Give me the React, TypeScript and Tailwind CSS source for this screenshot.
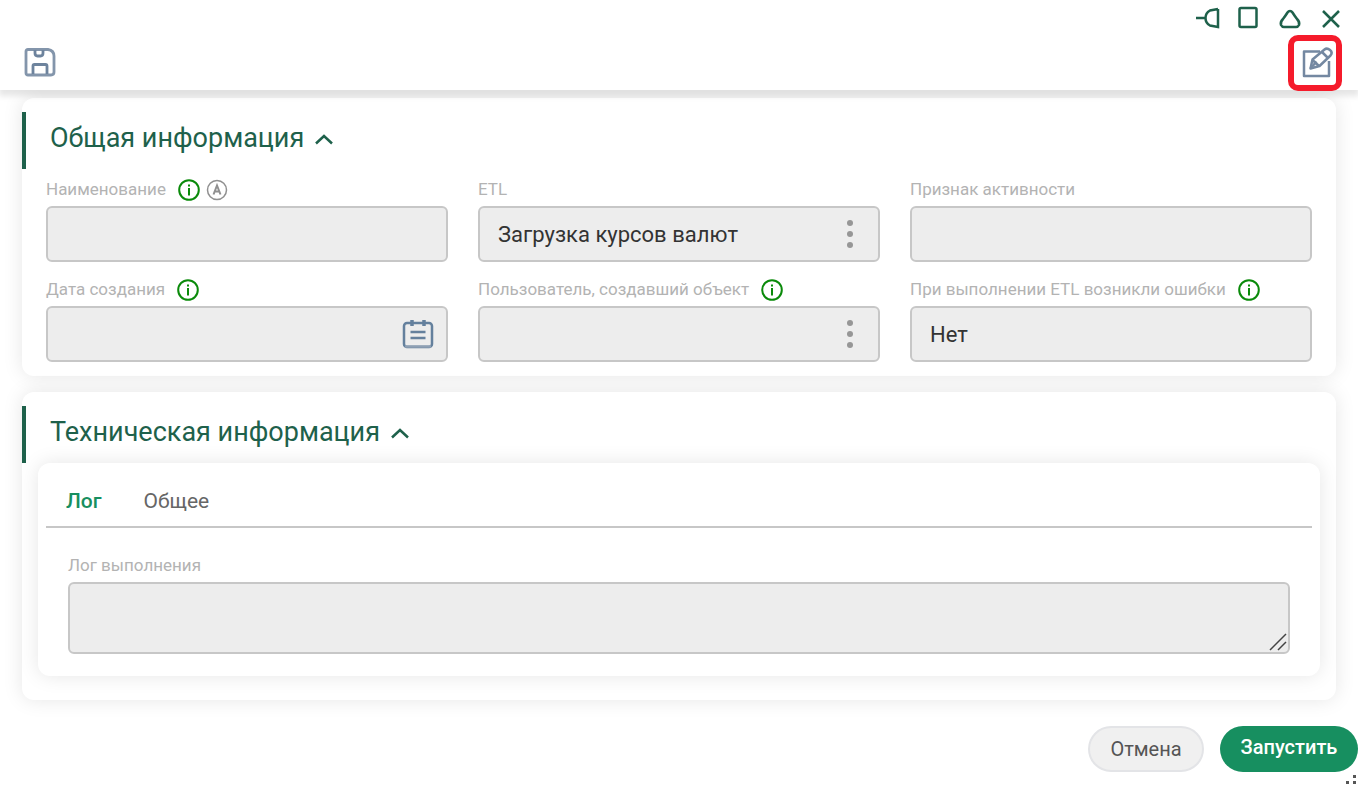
import { useState, type ReactNode } from "react";

function InfoIcon() {
  return (
    <svg viewBox="0 0 22 22" className="h-[22px] w-[22px]" fill="none" stroke="#0a8a0a" strokeWidth="2" aria-hidden="true">
      <circle cx="11" cy="11" r="9.800" />
      <path d="M11 9v7.500M11 5.500v2" />
    </svg>
  );
}

function AutoIcon() {
  return (
    <svg viewBox="0 0 22 22" className="h-[22px] w-[22px]" fill="none" stroke="#909090" strokeWidth="1.500" aria-hidden="true">
      <circle cx="11" cy="11" r="9.500" />
      <path d="M7.500 15.500 11 6.500 14.500 15.500M8.500 12.500h5" strokeWidth="2" />
    </svg>
  );
}

function CalendarIcon() {
  return (
    <svg viewBox="0 0 32 32" className="h-8 w-8" fill="none" stroke="#64809d" strokeWidth="2.500" aria-hidden="true">
      <rect x="2" y="5" width="28" height="24" rx="3" />
      <path d="M3 28.500h26" stroke="#8fa0b4" />
      <path d="M10 2v6M22 2v6" strokeWidth="3.500" />
      <path d="M8.500 14h15M8.500 20h15" strokeWidth="2.500" />
    </svg>
  );
}

function DotsIcon() {
  return (
    <svg viewBox="0 0 8 32" className="h-8 w-2" fill="#969696" aria-hidden="true">
      <circle cx="4" cy="5" r="3" />
      <circle cx="4" cy="16" r="3" />
      <circle cx="4" cy="27" r="3" />
    </svg>
  );
}

type FieldProps = {
  id: string;
  label: string;
  value?: string;
  icons?: ReactNode;
  action?: ReactNode;
  actionLabel?: string;
};

function Field({ id, label, value = "", icons, action, actionLabel }: FieldProps) {
  return (
    <div>
      <div className="flex h-8 items-center gap-3">
        <label htmlFor={id} className="text-[17px] text-[#b3b3b3]">
          {label}
        </label>
        <span className="flex gap-1.5">{icons}</span>
      </div>
      <div className="flex h-14 items-center rounded-md border-2 border-[#c7c7c7] bg-[#ededed]">
        <input
          id={id}
          readOnly
          defaultValue={value}
          className="h-full min-w-0 flex-1 bg-transparent px-[18px] text-[22px] text-[#333] outline-none"
        />
        {action && (
          <button type="button" aria-label={actionLabel} className="flex h-full w-14 items-center justify-center">
            {action}
          </button>
        )}
      </div>
    </div>
  );
}

function Section({ title, children }: { title: string; children: ReactNode }) {
  const [isOpen, setIsOpen] = useState(true);

  return (
    <section className="rounded-xl bg-white pt-3.5 shadow-[0_0_20px_rgba(0,0,0,0.1)]">
      <h2 className="border-l-4 border-[#1e614b]">
        <button
          type="button"
          aria-expanded={isOpen}
          onClick={() => setIsOpen((open) => !open)}
          className="flex h-[57px] items-center gap-2.5 px-6 pb-1 text-[27px] text-[#1e614b]"
        >
          <span>{title}</span>
          <svg viewBox="0 0 20 12" className="h-3 w-5" fill="none" stroke="currentColor" strokeWidth="2.500" aria-hidden="true">
            <path d="M2 10.500 10 3l8 7.500" />
          </svg>
        </button>
      </h2>
      {isOpen && children}
    </section>
  );
}

const windowControls = [
  { label: "Закрепить", path: "M1 13h9M23 4v18L15 20.500Q10.500 18 10.500 13T15 5.500L23 4" },
  { label: "Развернуть", path: "M5 3h14q1.500 0 1.500 1.500v16q0 1.500-1.500 1.500H5q-1.500 0-1.500-1.500v-16Q3.500 3 5 3Z" },
  { label: "Свернуть", path: "M13 6q1.500 0 2.500 1.500Q17 10 20 14q3 3 2 6-1 2-3 2H7q-2 0-3-2-1-3 2-6 3-4 4.500-6.500Q11.500 6 13 6Z" },
  { label: "Закрыть", path: "M5 6l16 16M21 6 5 22" },
];

const tabs = ["Лог", "Общее"];

export default function App() {
  const [activeTab, setActiveTab] = useState("Лог");

  return (
    <div className="relative flex min-h-screen flex-col bg-white [font-family:Roboto,'Liberation_Sans',sans-serif]">
      <header className="relative z-10 bg-white shadow-[0_5px_6px_1px_rgba(0,0,0,0.1)]">
        <div className="flex h-9 items-center justify-end pr-[7px]">
          {windowControls.map((control) => (
            <button key={control.label} type="button" aria-label={control.label} className="flex h-9 w-[41px] items-center justify-center">
              <svg viewBox="0 0 26 26" className="h-[26px] w-[26px]" fill="none" stroke="#1e614b" strokeWidth="2.500" aria-hidden="true">
                <path d={control.path} />
              </svg>
            </button>
          ))}
        </div>
        <div className="flex h-[54px] items-center justify-between pr-4 pl-6">
          <button type="button" aria-label="Сохранить">
            <svg viewBox="0 0 32 30" className="h-[30px] w-8" fill="none" stroke="#8395ab" strokeWidth="2.800" strokeLinejoin="round" aria-hidden="true">
              <path d="M4 1.500h20q6 1 6 6.500V24q0 3-3 3H4q-2 0-2-2V3.500q0-2 2-2Z" />
              <path d="M11 2v3q0 3 2.500 3h3Q19 8 19 5V2" stroke="#6d839d" />
              <path d="M9 26v-8q0-1.500 1.500-1.500h11q1.500 0 1.500 1.500v8" stroke="#6d839d" />
            </svg>
          </button>
          <div className="relative flex w-[54px] justify-center">
            <button type="button" aria-label="Редактировать">
              <svg viewBox="0 0 32 32" className="ml-1 h-8 w-8" fill="none" stroke="#7488a1" strokeWidth="2.500" strokeLinejoin="round" aria-hidden="true">
                <path d="M19 4.500H3V29h25V14" />
                <path d="m9.500 21.500 2-9L23.500 2.500q2.500-2 5.500.500t.500 5.500L18.500 19Z" />
                <path d="m21 5 6 6M11.500 13l6.500 6M9.500 21.500l6-7" />
              </svg>
            </button>
            <span className="pointer-events-none absolute top-1/2 left-0 h-14 w-[54px] -translate-y-1/2 rounded-[10px] border-6 border-[#f51b2b]" />
          </div>
        </div>
      </header>

      <main className="flex flex-col gap-4 px-[22px] pt-2">
        <Section title="Общая информация">
          <div className="grid grid-cols-3 gap-x-[30px] gap-y-3 px-6 pt-[5px] pb-3.5">
            <Field id="name" label="Наименование" icons={<><InfoIcon /><AutoIcon /></>} />
            <Field id="etl" label="ETL" value="Загрузка курсов валют" action={<DotsIcon />} actionLabel="Выбрать ETL" />
            <Field id="active" label="Признак активности" />
            <Field id="created" label="Дата создания" icons={<InfoIcon />} action={<CalendarIcon />} actionLabel="Выбрать дату" />
            <Field id="author" label="Пользователь, создавший объект" icons={<InfoIcon />} action={<DotsIcon />} actionLabel="Выбрать пользователя" />
            <Field id="errors" label="При выполнении ETL возникли ошибки" value="Нет" icons={<InfoIcon />} />
          </div>
        </Section>

        <Section title="Техническая информация">
          <div className="px-4 pb-6">
            <div className="rounded-xl bg-white px-2 pb-[22px] shadow-[0_0_20px_rgba(0,0,0,0.1)]">
              <div role="tablist" className="flex h-[65px] gap-[42px] border-b-2 border-[#c7c7c7] px-5 pt-3.5">
                {tabs.map((tab) => (
                  <button
                    key={tab}
                    id={`tab-${tab}`}
                    type="button"
                    role="tab"
                    aria-selected={activeTab === tab}
                    onClick={() => setActiveTab(tab)}
                    className={`text-[21px] ${activeTab === tab ? "font-medium text-[#178f60]" : "text-[#666]"}`}
                  >
                    {tab}
                  </button>
                ))}
              </div>
              <div role="tabpanel" aria-labelledby={`tab-${activeTab}`} className="px-[22px] pt-[22px]">
                <label htmlFor="log" className="flex h-8 items-center text-[17px] text-[#b3b3b3]">
                  Лог выполнения
                </label>
                <div className="relative">
                  <textarea
                    id="log"
                    readOnly
                    className="block h-[72px] w-full resize-none rounded-md border-2 border-[#c7c7c7] bg-[#ededed] px-[18px] py-2 text-[22px] text-[#333] outline-none"
                  />
                  <svg viewBox="0 0 18 18" className="pointer-events-none absolute right-[3px] bottom-[3px] h-[18px] w-[18px]" stroke="#444" strokeWidth="1.500" aria-hidden="true">
                    <path d="M1 17 17 1M9 17l8-8" />
                  </svg>
                </div>
              </div>
            </div>
          </div>
        </Section>
      </main>

      <footer className="flex justify-end gap-4 pt-[26px]">
        <button type="button" className="h-[46px] w-[116px] rounded-full border-2 border-[#e3e4e7] bg-[#f0f0f0] text-xl text-[#555]">
          Отмена
        </button>
        <button type="button" className="h-[46px] w-[138px] rounded-full bg-[#178f60] pb-1 text-xl font-medium text-white">
          Запустить
        </button>
      </footer>
      <svg viewBox="0 0 14 12" className="absolute right-0 bottom-0 h-3 w-3.5" fill="#555" aria-hidden="true">
        <path d="M9 1h3v3H9zM2 7h3v3H2zM9 7h3v3H9z" />
      </svg>
    </div>
  );
}
